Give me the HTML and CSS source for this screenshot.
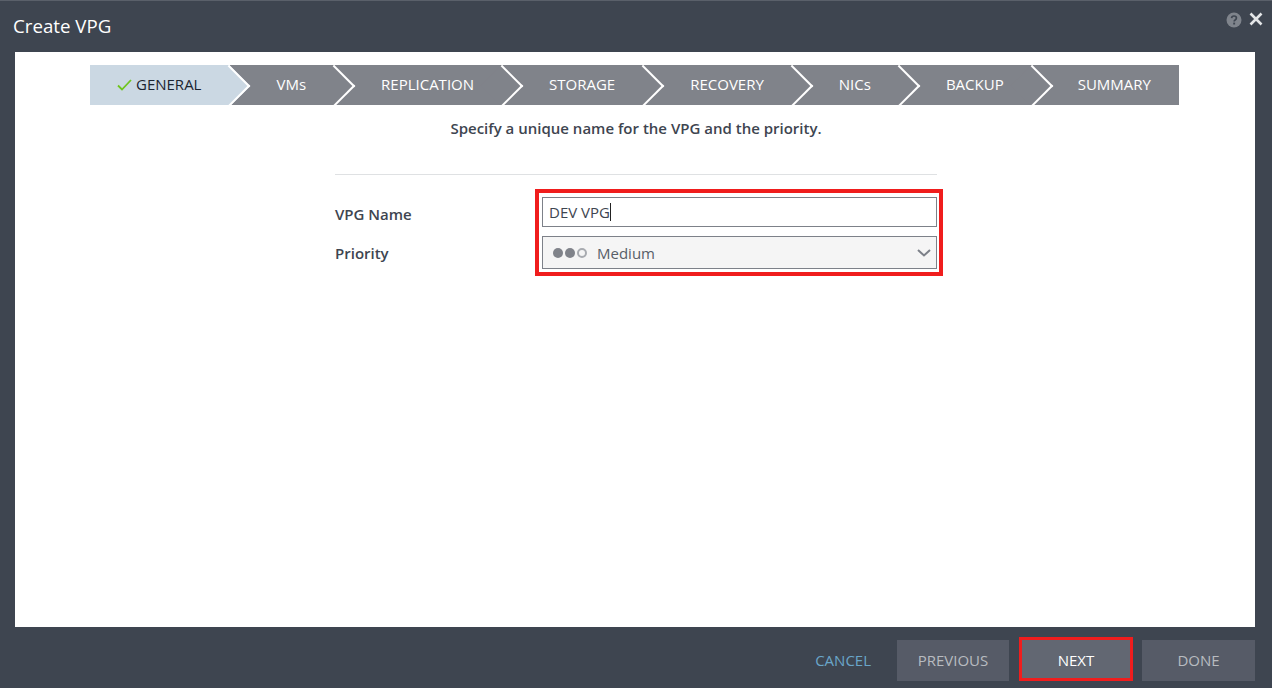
FILE: index.html
```html
<!DOCTYPE html>
<html lang="en">
<head>
<meta charset="utf-8">
<title>Create VPG</title>
<link rel="stylesheet" href="styles.css">
</head>
<body>
<div class="dialog">
  <header class="titlebar">
    <h1 class="title">Create VPG</h1>
    <div class="tools">
      <svg class="icon-help" width="16" height="16" viewBox="0 0 16 16"><circle cx="8" cy="8" r="7.5" fill="#7f848c"/><path d="M5.6 6.1C5.7 4.8 6.7 4 8 4c1.400 0 2.400.8 2.400 2 0 1-.6 1.500-1.300 2-.6.4-.9.7-.9 1.500" fill="none" stroke="#3e4550" stroke-width="1.700"/><rect x="7.200" y="10.600" width="1.900" height="1.900" fill="#3e4550"/></svg>
      <svg class="icon-close" width="14" height="14" viewBox="0 0 14 14"><path d="M1.500 1.500l11 11M12.500 1.500l-11 11" stroke="#e4e6e8" stroke-width="2.600" fill="none"/></svg>
    </div>
  </header>
  <main class="panel">
    <ol class="steps">
      <li class="step step-active"><svg class="check" width="15" height="12" viewBox="0 0 15 12"><path d="M1 6.500l4 4L14 1" fill="none" stroke="#6fc51e" stroke-width="1.800"/></svg>GENERAL</li>
      <li class="step">VMs</li>
      <li class="step">REPLICATION</li>
      <li class="step">STORAGE</li>
      <li class="step">RECOVERY</li>
      <li class="step">NICs</li>
      <li class="step">BACKUP</li>
      <li class="step step-last">SUMMARY</li>
    </ol>
    <p class="lead">Specify a unique name for the VPG and the priority.</p>
    <form class="form">
      <div class="labels">
        <div class="label label-name">VPG Name</div>
        <div class="label label-priority">Priority</div>
      </div>
      <div class="fields">
        <div class="input">DEV VPG<span class="caret"></span></div>
        <div class="select">
          <span class="dots"><i class="dot"></i><i class="dot"></i><i class="dot dot-empty"></i></span>
          <span class="select-text">Medium</span>
          <svg class="chevron" width="14" height="8" viewBox="0 0 14 8"><path d="M1 1l6 5.500L13 1" fill="none" stroke="#7d8189" stroke-width="2"/></svg>
        </div>
      </div>
    </form>
  </main>
  <footer class="footer">
    <span class="cancel">CANCEL</span>
    <span class="btn btn-prev">PREVIOUS</span>
    <span class="btn btn-next">NEXT</span>
    <span class="btn btn-done">DONE</span>
  </footer>
</div>
</body>
</html>
```
FILE: styles.css
```css
* { box-sizing: border-box; }
html, body { margin: 0; padding: 0; height: 100%; overflow: hidden; }
body { font-family: "Open Sans", "Liberation Sans", sans-serif; background: #3e4550; }
.dialog { width: 1272px; height: 688px; display: flex; flex-direction: column; background: #3e4550; border-top: 1px solid #5a606a; }
.titlebar { height: 51px; flex: none; display: flex; justify-content: space-between; padding: 10px 9px 0 13px; }
.title { margin: 0; font-size: 18.700px; font-weight: 400; color: #fff; line-height: 30px; }
.tools { display: flex; gap: 7px; padding-top: 1px; align-items: flex-start; }
.panel { flex: none; height: 575px; margin: 0 17px 0 15px; background: #fff; padding-top: 13px; }
.steps { list-style: none; margin: 0 0 0 75px; padding: 0; width: 1089px; height: 40px; display: flex; overflow: hidden; background: #80838a; }
.step { position: relative; height: 40px; padding: 0 29px 0 46px; font-size: 15px; line-height: 38px; color: #fff; white-space: nowrap; flex: none; }
.step::after { content: ""; position: absolute; top: 5.900px; right: -14.100px; width: 28.200px; height: 28.200px; transform: rotate(45deg); border-top: 2px solid #fff; border-right: 2px solid #fff; background: #80838a; z-index: 1; }
.step-last { flex: 1; padding-left: 45px; }
.step-last::after { display: none; }
.step-active { background: #cbd8e3; color: #1b2430; padding: 0 29px 0 27px; }
.step-active::after { background: #cbd8e3; }
.check { margin-right: 4px; vertical-align: -1px; }
.lead { margin: 13px 0 0; font-size: 15px; font-weight: 600; line-height: 20px; text-align: center; color: #3e4550; padding-left: 2px; }
.form { margin: 36px 0 0 320px; width: 602px; border-top: 1px solid #dfe1e3; padding-top: 22px; display: flex; }
.labels { width: 207px; flex: none; }
.label { font-size: 15px; font-weight: 600; color: #3e4550; line-height: 20px; }
.label-name { margin-top: 7px; }
.label-priority { margin-top: 19px; }
.fields { position: relative; flex: 1; display: flex; flex-direction: column; gap: 9px; }
.fields::before { content: ""; position: absolute; inset: -8px -6px -7px -7px; border: 4px solid #f01d1d; pointer-events: none; }
.input { height: 30px; border: 1px solid #7d8189; padding-left: 6px; font-size: 15px; line-height: 27px; color: #3e4550; display: flex; align-items: center; }
.caret { display: inline-block; width: 1px; height: 18px; background: #222; }
.select { height: 33px; border: 1px solid #7d8189; background: #f5f5f5; display: flex; align-items: center; padding: 0 5px 0 10px; font-size: 15px; color: #585e68; }
.dots { display: flex; gap: 2px; }
.dot { width: 10px; height: 10px; border-radius: 50%; background: #80838a; }
.dot-empty { background: transparent; border: 2px solid #a8abb0; }
.select-text { margin-left: 10px; flex: 1; }
.footer { flex: 1; display: flex; align-items: flex-start; justify-content: flex-end; padding: 10px 17px 0 0; }
.cancel { margin-right: 26px; margin-top: 3px; font-size: 15px; line-height: 41px; color: #6aa5c9; }
.btn { width: 112px; height: 41px; margin-top: 3px; background: #565b67; color: #b8bbc0; font-size: 15px; line-height: 41px; text-align: center; }
.btn-next { width: 114px; height: 44px; margin: 0 9px 0 10px; background: #626772; color: #fff; border: 3px solid #f01d1d; line-height: 41px; }
.btn-done { width: 113px; }
```
